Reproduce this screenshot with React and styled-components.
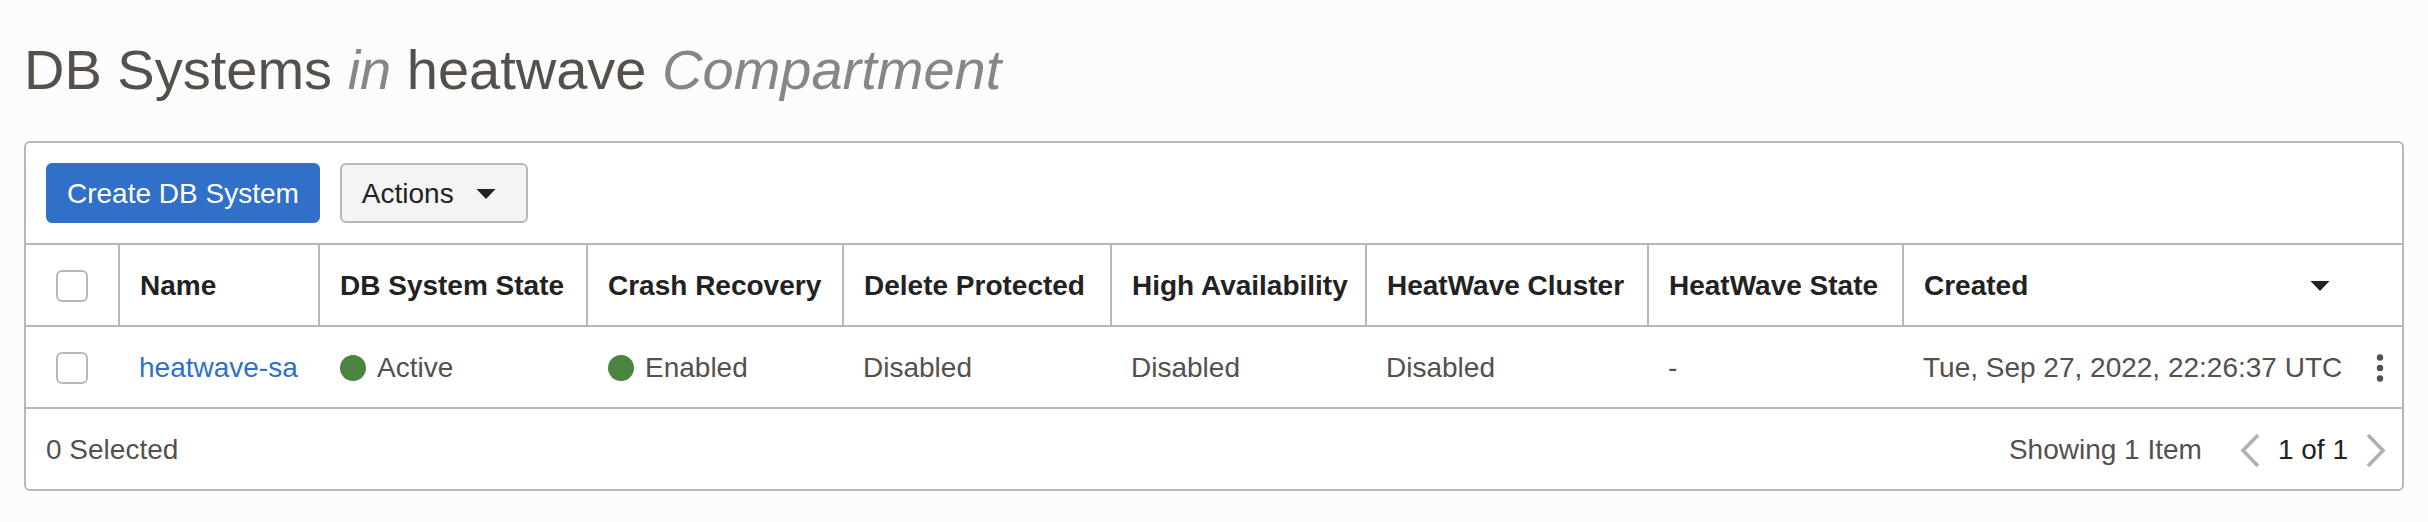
import React from "react";
import styled, { createGlobalStyle } from "styled-components";

const GlobalStyle = createGlobalStyle`
  *, *::before, *::after { box-sizing: border-box; }
  body {
    margin: 0;
    background: #fcfcfc;
    color: #55504b;
    font-family: "Liberation Sans", Arial, sans-serif;
    font-size: 28px;
    line-height: 32px;
  }
  button, input { font: inherit; color: inherit; }
`;

const Page = styled.main`
  padding: 36px 24px 24px;
`;

const Title = styled.h1`
  margin: 0 0 37px;
  color: #55504a;
  font-size: 56px;
  font-weight: 400;
  line-height: 68px;

  em {
    color: #868686;
  }
`;

const Panel = styled.section`
  border: 2px solid #b4b9c0;
  border-radius: 6px;
  background: #fff;
`;

const Toolbar = styled.div`
  display: flex;
  flex-wrap: wrap;
  gap: 20px;
  padding: 20px;
`;

const Button = styled.button`
  display: flex;
  align-items: center;
  gap: 22px;
  height: 60px;
  padding: 2px ${(p) => (p.$primary ? "19px" : "20px")} 0;
  border: 2px solid ${(p) => (p.$primary ? "#3070c8" : "#b4b9c0")};
  border-radius: 6px;
  background: ${(p) => (p.$primary ? "#3070c8" : "#f4f4f4")};
  color: ${(p) => (p.$primary ? "#fff" : "#222")};
  cursor: pointer;
`;

const ButtonCaret = styled.span`
  display: flex;
  padding-right: 10px;
`;

const TableScroll = styled.div`
  overflow-x: auto;
`;

const Table = styled.table`
  width: 100%;
  min-width: 2340px;
  table-layout: fixed;
  border-collapse: separate;
  border-spacing: 0;
`;

const Col = styled.col`
  width: ${(p) => (p.$width ? `${p.$width}px` : "auto")};
`;

const HeadCell = styled.th`
  height: 82px;
  padding: 2px 0 0 20px;
  border-top: 2px solid #b4b9c0;
  border-right: ${(p) => (p.$open ? "0" : "2px solid #b4b9c0")};
  color: #222;
  font-weight: 700;
  text-align: left;
  white-space: nowrap;
`;

const Cell = styled.td`
  height: 84px;
  padding: 2px 0 0 ${(p) => (p.$marked ? "20px" : "19px")};
  border-top: 2px solid #b4b9c0;
  border-bottom: 2px solid #b4b9c0;
  white-space: nowrap;
`;

const Checkbox = styled.input.attrs({ type: "checkbox" })`
  appearance: none;
  display: block;
  width: 32px;
  height: 32px;
  margin: 0 0 0 10px;
  border: 2px solid #b4b9c0;
  border-radius: 6px;
  background: #fff;

  &:checked {
    background: #3070c8;
  }
`;

const SortButton = styled.button`
  display: flex;
  align-items: center;
  justify-content: space-between;
  width: 100%;
  padding: 0 72px 0 0;
  border: 0;
  background: none;
  font-weight: 700;
  cursor: pointer;
`;

const NameLink = styled.a`
  color: #2f70cb;
  text-decoration: none;
`;

const Status = styled.span`
  display: flex;
  align-items: center;
  gap: 11px;

  &::before {
    content: "";
    width: 26px;
    height: 26px;
    border-radius: 50%;
    background: #4b8440;
  }
`;

const IconButton = styled.button`
  display: flex;
  padding: 0;
  border: 0;
  background: none;
  cursor: pointer;
`;

const Footer = styled.footer`
  display: flex;
  flex-wrap: wrap;
  align-items: center;
  justify-content: space-between;
  min-height: 80px;
  padding: 2px 16px 0 20px;
`;

const Paging = styled.div`
  display: flex;
  align-items: center;
  gap: 38px;
`;

const Pager = styled.nav`
  display: flex;
  align-items: center;
  gap: 18px;
  color: #222;
`;

const Caret = () => (
  <svg width="20" height="10" viewBox="0 0 20 10" aria-hidden="true">
    <path d="M0.5 0H19.5L10 10Z" fill="#222" />
  </svg>
);

const Kebab = () => (
  <svg width="8" height="28" viewBox="0 0 8 28" aria-hidden="true" fill="#55504b">
    <circle cx="4" cy="3.5" r="3.2" />
    <circle cx="4" cy="14" r="3.2" />
    <circle cx="4" cy="24.5" r="3.2" />
  </svg>
);

const Chevron = ({ d }) => (
  <svg width="20" height="34" viewBox="0 0 20 34" aria-hidden="true">
    <path d={d} fill="none" stroke="#b0b0b0" strokeWidth="3.6" />
  </svg>
);

const columns = [
  { label: "Name", width: 200 },
  { label: "DB System State", width: 268 },
  { label: "Crash Recovery", width: 256 },
  { label: "Delete Protected", width: 268 },
  { label: "High Availability", width: 255 },
  { label: "HeatWave Cluster", width: 282 },
  { label: "HeatWave State", width: 255 },
];

const systems = [
  {
    name: "heatwave-sa",
    state: "Active",
    crashRecovery: "Enabled",
    deleteProtected: "Disabled",
    highAvailability: "Disabled",
    cluster: "Disabled",
    heatwaveState: "-",
    created: "Tue, Sep 27, 2022, 22:26:37 UTC",
  },
];

export default function App() {
  return (
    <>
      <GlobalStyle />
      <Page>
        <Title>
          DB Systems <em>in</em> heatwave <em>Compartment</em>
        </Title>
        <Panel>
          <Toolbar>
            <Button type="button" $primary>Create DB System</Button>
            <Button type="button" aria-haspopup="menu">
              Actions
              <ButtonCaret><Caret /></ButtonCaret>
            </Button>
          </Toolbar>
          <TableScroll>
            <Table>
              <colgroup>
                <Col $width={94} />
                {columns.map((c) => <Col key={c.label} $width={c.width} />)}
                <Col />
                <Col $width={45} />
              </colgroup>
              <thead>
                <tr>
                  <HeadCell><Checkbox aria-label="Select all DB systems" /></HeadCell>
                  {columns.map((c) => (
                    <HeadCell key={c.label} scope="col">{c.label}</HeadCell>
                  ))}
                  <HeadCell scope="col" aria-sort="descending" colSpan={2} $open>
                    <SortButton type="button">
                      Created
                      <Caret />
                    </SortButton>
                  </HeadCell>
                </tr>
              </thead>
              <tbody>
                {systems.map((s) => (
                  <tr key={s.name}>
                    <Cell $marked><Checkbox aria-label={`Select ${s.name}`} /></Cell>
                    <Cell><NameLink href="#heatwave-sa">{s.name}</NameLink></Cell>
                    <Cell $marked><Status>{s.state}</Status></Cell>
                    <Cell $marked><Status>{s.crashRecovery}</Status></Cell>
                    <Cell>{s.deleteProtected}</Cell>
                    <Cell>{s.highAvailability}</Cell>
                    <Cell>{s.cluster}</Cell>
                    <Cell>{s.heatwaveState}</Cell>
                    <Cell>{s.created}</Cell>
                    <Cell>
                      <IconButton type="button" aria-label={`Actions for ${s.name}`}>
                        <Kebab />
                      </IconButton>
                    </Cell>
                  </tr>
                ))}
              </tbody>
            </Table>
          </TableScroll>
          <Footer>
            <span>0 Selected</span>
            <Paging>
              <span>Showing 1 Item</span>
              <Pager aria-label="Pagination">
                <IconButton type="button" aria-label="Previous page">
                  <Chevron d="M18 2L3 17.5L18 33" />
                </IconButton>
                <span>1 of 1</span>
                <IconButton type="button" aria-label="Next page">
                  <Chevron d="M2 2L17 17.5L2 33" />
                </IconButton>
              </Pager>
            </Paging>
          </Footer>
        </Panel>
      </Page>
    </>
  );
}
